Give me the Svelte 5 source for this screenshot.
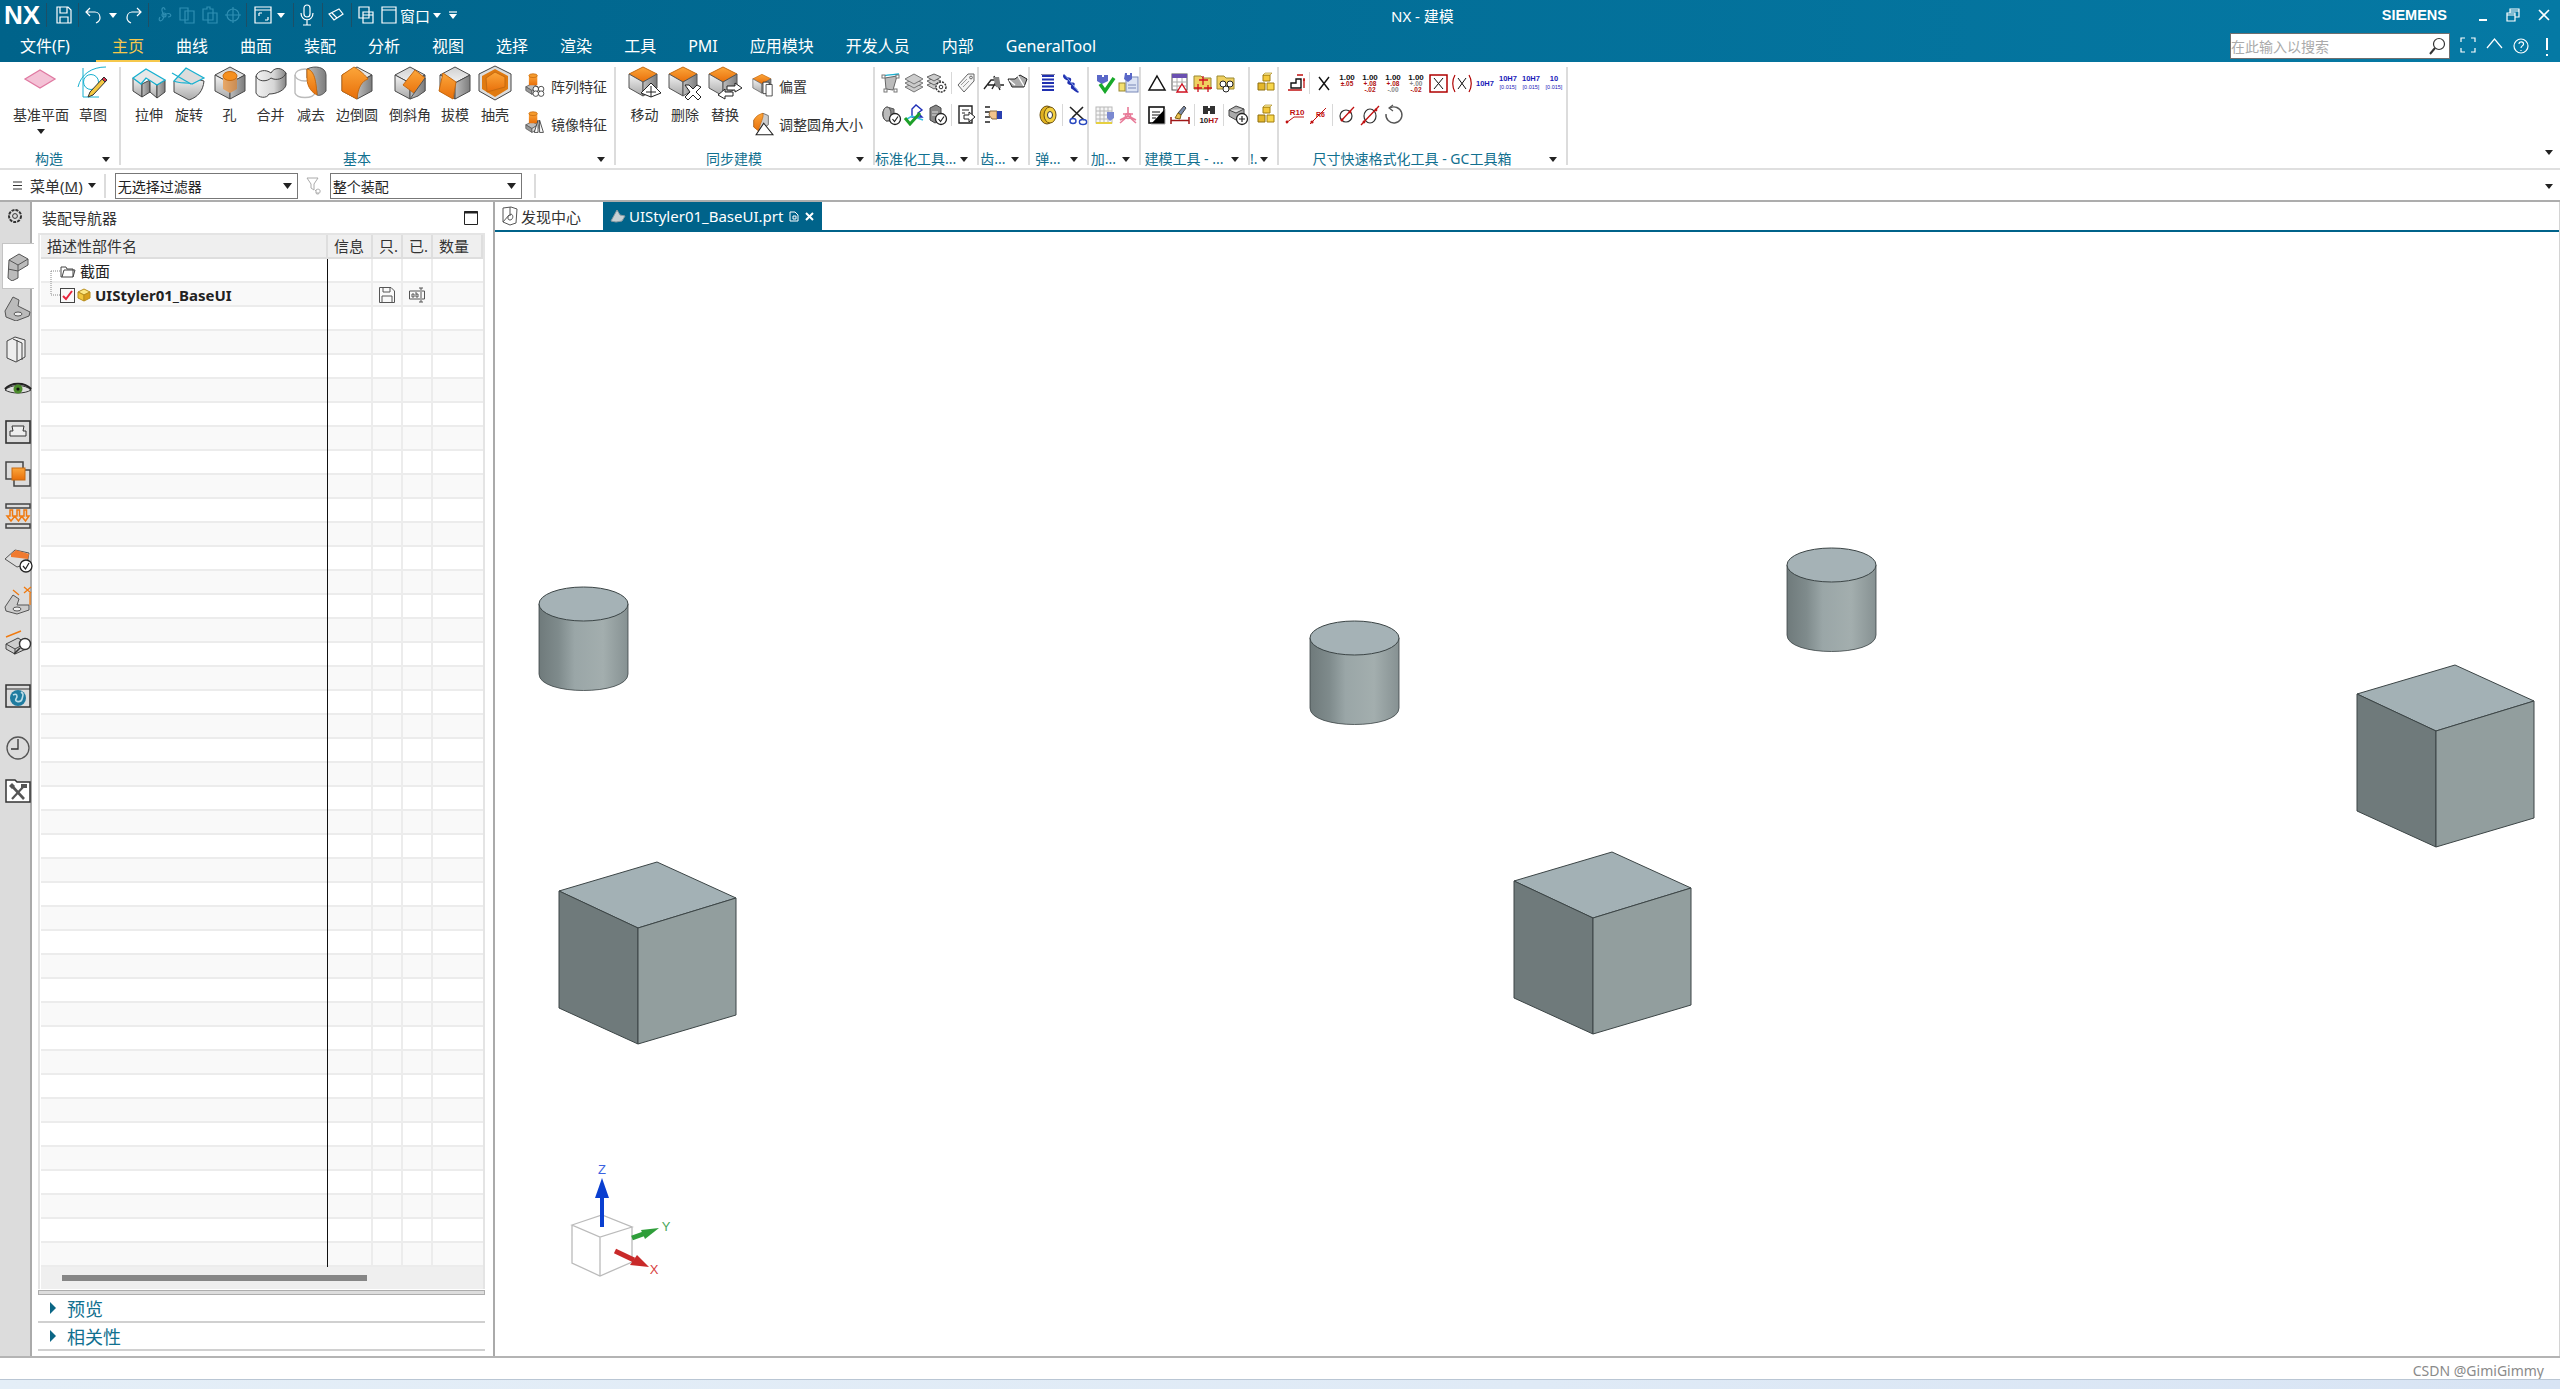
<script>
  const faces = (t = "url(#gT)", l = "url(#gL)", r = "url(#gR)") =>
    `<path d="M18 2 33 10 18 18 3 10z" fill="${t}" stroke="#4a4a4a"/><path d="M3 10 18 18V34L3 26z" fill="${l}" stroke="#4a4a4a"/><path d="M33 10 18 18V34L33 26z" fill="${r}" stroke="#4a4a4a"/>`;
  const orangeTop = `<path d="M16 2 30 9 16 17 2 9z" fill="url(#gO)" stroke="#c76a10"/><path d="M2 9 16 17V31L2 23z" fill="url(#gL)" stroke="#555"/><path d="M30 9 16 17V31L30 23z" fill="url(#gR)" stroke="#555"/>`;
  const miniCyl = `<path d="M8 9 16 5 24 9 16 14z" fill="#bbb" stroke="#555" transform="translate(-5 9)"/><path d="M3 18 11 23V28L3 23z" fill="#999" stroke="#555"/><path d="M11 23 19 18V23L11 28z" fill="#ddd" stroke="#555"/><rect x="7" y="3" width="11" height="13" fill="url(#gO)"/><ellipse cx="12.5" cy="3.5" rx="5.5" ry="2.5" fill="#f59a2c" stroke="#c76a10"/>`;
  const yellowBoxes = `<path d="M8 3h7v6H8z" fill="#f4c93c" stroke="#a27f10"/><path d="M3 11h7v7H3z" fill="#e5b72a" stroke="#8d6e10"/><path d="M12 11h7v7h-7z" fill="#f8d74c" stroke="#a27f10"/><path d="M8 3l2-2h7l-2 2z" fill="#fff0a0" stroke="#a27f10" stroke-width=".6"/>`;
  const num = (a, b, c = "#b01010", d = "#b01010") =>
    `<text x="11" y="8" font-size="8" text-anchor="middle" font-family="Liberation Sans" font-weight="700" fill="#111">1.00</text><text x="11" y="14" font-size="6.5" text-anchor="middle" font-family="Liberation Sans" font-weight="700" fill="${c}">${a}</text><text x="11" y="20" font-size="6.5" text-anchor="middle" font-family="Liberation Sans" font-weight="700" fill="${d}">${b}</text>`;
  const h7 = (a, lines = true) =>
    `<text x="11" y="${lines ? 9 : 14}" font-size="7.5" text-anchor="middle" font-family="Liberation Sans" font-weight="700" fill="#1a1ab8">${a}</text>` +
    (lines ? `<text x="11" y="17" font-size="5.5" text-anchor="middle" font-family="Liberation Sans" fill="#1a1ab8">[0.015]</text>` : "");

  const icons = {
    datum: `<path d="M2 14 17 5 32 14 17 23z" fill="#f4c2d6" stroke="#e07aa2" stroke-width="1.3"/>`,
    sketch: `<path d="M3 22C6 9 17 2 31 2" fill="none" stroke="#18b0d0"/><path d="M8 3V32H24" fill="none" stroke="#18b0d0"/><circle cx="16" cy="17" r="7.5" fill="none" stroke="#18b0d0"/><path d="M29 12 32 15 18 30 13 32 15 27z" fill="#f5c842" stroke="#333"/><path d="M29 12 32 15 30 17 27 14z" fill="#d8304a" stroke="#333"/>`,
    extrude: `<path d="M2 13V26L11 32V19z" fill="url(#gL)" stroke="#444"/><path d="M11 19V32L19 27V15z" fill="url(#gR)" stroke="#444"/><path d="M19 15 26 20V33L19 27z" fill="url(#gL)" stroke="#444"/><path d="M26 20 34 15V27L26 33z" fill="url(#gR)" stroke="#444"/><path d="M2 13 15 4 34 15 26 20 15 13 10 19z" fill="#e8e8e8" stroke="#18b0d0" stroke-width="1.3"/>`,
    revolve: `<path d="M3 16V27L18 35C27 32 32 26 33 16L21 13z" fill="url(#gL)" stroke="#444"/><path d="M3 16 15 3 33 13 21 19C16 17 9 19 3 16z" fill="#dcdcdc" stroke="#18b0d0" stroke-width="1.2"/><path d="M1 8 20 19" stroke="#18b0d0" stroke-width="1.2"/>`,
    hole: faces() + `<path d="M11 11V24L18 28 25 24V11z" fill="url(#gO2)"/><ellipse cx="18" cy="11" rx="7" ry="4.5" fill="#f58f1e" stroke="#c76a10"/>`,
    unite: `<path d="M3 11V28C5 33 14 34 16 29 24 29 32 25 33 20V8C29 2 21 2 18 8 13 4 5 5 3 11z" fill="url(#gU)" stroke="#444"/><path d="M3 11C5 17 14 17 18 13 23 16 31 14 33 8" fill="none" stroke="#444"/>`,
    subtract: `<ellipse cx="12" cy="10" rx="10" ry="6" fill="none" stroke="#bbb" stroke-width="1.4"/><path d="M2 10V28C4 34 20 34 22 28V10" fill="none" stroke="#bbb" stroke-width="1.4"/><path d="M14 4C22 0 33 2 33 10V26C30 30 26 31 24 30 24 21 20 14 14 13z" fill="url(#gR)" stroke="#555"/><path d="M14 4C20 5 23 12 24 30 20 28 14 23 14 13z" fill="url(#gO)" stroke="#c76a10"/>`,
    edge: faces("#e6e6e6") + `<path d="M3 10 15 2C22 6 27 11 29 14 23 16 19 22 18 34L3 26z" fill="url(#gO)" stroke="#c76a10"/>`,
    chamfer: faces() + `<path d="M23 5 33 13 26 31 11 20z" fill="url(#gO)" stroke="#c76a10"/><path d="M18 34 26 31 33 26V13z" fill="url(#gR)" stroke="#555"/>`,
    draft: faces() + `<path d="M6 8 19 17 16 34 2 26z" fill="url(#gO)" stroke="#c76a10"/>`,
    shell: `<path d="M18 1 34 9V26L18 35 2 26V9z" fill="#ddd" stroke="#444"/><path d="M18 4 31 11V24L18 32 5 24V11z" fill="#e07a10"/><path d="M18 7 28 12V22L10 27 9 13z" fill="url(#gO)" stroke="#c76a10"/>`,
    array: miniCyl + `<g fill="#fff" stroke="#222"><circle cx="16" cy="21" r="3.6"/><circle cx="23" cy="21" r="3.6"/><circle cx="16" cy="27" r="3.6"/><circle cx="23" cy="27" r="3.6"/></g>`,
    mirror: miniCyl + `<path d="M14 28 19 12V28zM21 12 26 28H21z" fill="#fff" stroke="#222"/>`,
    move: orangeTop + `<path d="M24 21 34 31 24 35 14 31z" fill="#fff" stroke="#222" transform="translate(0 -3)"/><path d="M24 21V32M19 27H29" stroke="#222"/>`,
    del: orangeTop + `<path d="M18 20 22 20 26 24 30 20 34 22 29 27 34 32 31 35 26 30 21 35 18 32 23 27z" fill="#fff" stroke="#222"/>`,
    replace: orangeTop + `<path d="M20 21H28V18L35 23 28 27V25H20zM26 27H18V24L11 30 18 34V31H26z" fill="#fff" stroke="#222"/>`,
    offset: `<g transform="scale(.85)">${orangeTop}</g><path d="M15 12H23V27H15z" fill="#fff" stroke="#222"/><path d="M19 15H27V30H19z" fill="#fff" stroke="#222"/>`,
    resize: `<path d="M3 12 15 3 22 6V18L10 26 3 21z" fill="#ccc" stroke="#555"/><path d="M3 12C6 6 11 4 15 3 16 9 12 14 9 26L3 21z" fill="url(#gO)" stroke="#c76a10"/><path d="M16 16 28 31H6z" fill="#fff" stroke="#222" stroke-width="1.4"/>`,

    frame: `<path d="M5 6 17 4 13 18 6 17z" fill="#bbb" stroke="#666"/><path d="M3 4C9 2 14 3 19 2" fill="none" stroke="#18b0d0" stroke-width="1.3"/><g fill="#fff" stroke="#777"><rect x="2" y="3" width="3" height="3"/><rect x="16" y="3" width="3" height="3"/><rect x="4" y="17" width="3" height="3"/><rect x="14" y="17" width="3" height="3"/></g>`,
    layers: `<g fill="#ccc" stroke="#777"><path d="M11 11 20 15 11 20 2 15z"/><path d="M11 7 20 11 11 16 2 11z"/><path d="M11 2 20 7 11 12 2 7z"/></g>`,
    gearLayers: `<g fill="#ccc" stroke="#666"><path d="M8 10 15 13 8 17 1 13z"/><path d="M8 6 15 9 8 13 1 9z"/><path d="M8 2 15 5 8 9 1 5z"/></g><circle cx="15" cy="15" r="5" fill="#fff" stroke="#333" stroke-width="1.5" stroke-dasharray="2 1"/><circle cx="15" cy="15" r="1.8" fill="none" stroke="#333"/>`,
    tag: `<path d="M3 13 13 2H19V9L9 20z" fill="#f4f4f4" stroke="#666"/><circle cx="16" cy="5.5" r="1.4" fill="none" stroke="#666"/><path d="M6 13 12 7M8 15 14 9" stroke="#999"/>`,
    cylCheck: `<path d="M7 3C2 5 1 13 6 17H14V5z" fill="#888" stroke="#555"/><ellipse cx="7" cy="10" rx="4" ry="7" fill="#bbb" stroke="#555"/><circle cx="15" cy="15" r="5.5" fill="#fff" stroke="#222" stroke-width="1.3"/><path d="M12.5 15 14.5 17.5 18 12.5" fill="none" stroke="#222" stroke-width="1.2"/>`,
    wrench: `<path d="M9 5 13 1 19 6 15 9 19 13H9z" fill="#fff" stroke="#2030b8" stroke-width="1.4"/><path d="M4 15 9 12 20 16" fill="none" stroke="#36c0e0" stroke-width="1.5"/><path d="M2 14 7 20 17 9" fill="none" stroke="#1ea02a" stroke-width="3"/>`,
    boxCheck: `<path d="M4 4 10 1 15 4V16L9 19 4 16z" fill="#888" stroke="#444"/><path d="M6 8H12M6 11H12" stroke="#ddd"/><circle cx="15" cy="15" r="5.5" fill="#fff" stroke="#222" stroke-width="1.3"/><path d="M12.5 15 14.5 17.5 18 12.5" fill="none" stroke="#222" stroke-width="1.2"/>`,
    docArrow: `<path d="M4 2H17V19H4z" fill="#fff" stroke="#222" stroke-width="1.4"/><path d="M7 6H14M7 9H10" stroke="#222"/><path d="M9 11H14V8L20 13 14 18V15H9z" fill="#fff" stroke="#222"/>`,
    skA: `<path d="M1 17 8 8H14L9 17M5 13H21M11 4 17 18" fill="none" stroke="#222" stroke-width="1.4"/><path d="M10 5 16 5 18 16 13 15z" fill="#888"/>`,
    skB: `<path d="M2 7 6 15H18L21 7 14 3 9 7z" fill="#aaa" stroke="#222"/><path d="M3 8 9 13M12 4 18 14" stroke="#fff" stroke-width="1.4"/>`,
    hand: `<path d="M2 3H7M2 8H7M2 13H7M2 18H7" stroke="#222" stroke-width="1.5"/><path d="M7 7H14V15H9L6 11z" fill="#f2c48c" stroke="#8a6a40"/><rect x="14" y="7" width="5" height="8" fill="#2a40b0"/>`,
    coil: `<g fill="none" stroke="#2030b0" stroke-width="2"><path d="M5 4H17M5 7.5H17M5 11H17M5 14.5H17M5 18H17"/></g><path d="M4 2.5H18" stroke="#88a" />`,
    spring: `<path d="M5 3C3 5 7 7 9 7S8 10 9 11 12 12 13 12 11 15 13 16 17 20 18 19" fill="none" stroke="#2030b0" stroke-width="3"/><path d="M5 3 18 19" stroke="#88a8e8"/>`,
    goldCoil: `<ellipse cx="10" cy="11" rx="7" ry="9" fill="#e0b020" stroke="#6a5010"/><ellipse cx="13" cy="11" rx="6" ry="8" fill="#f4d040" stroke="#6a5010"/><ellipse cx="13" cy="11" rx="2.5" ry="3.5" fill="#fff" stroke="#333"/>`,
    scissors: `<path d="M4 3 18 16M17 3 6 14" stroke="#222" stroke-width="1.6"/><ellipse cx="7" cy="17" rx="3" ry="2.5" fill="none" stroke="#2848c0" stroke-width="1.4"/><ellipse cx="17" cy="18" rx="3.6" ry="2.5" fill="none" stroke="#2848c0" stroke-width="1.4"/>`,
    check: `<path d="M3 3H8V5H10V3H14V9L8 12 3 9z" fill="#5a68c8"/><path d="M6 12 11 19 20 6" fill="none" stroke="#18a82a" stroke-width="3.5"/>`,
    plugDoc: `<rect x="9" y="5" width="12" height="15" fill="#dce4f4" stroke="#7888b8"/><path d="M8 1H10V3H13V1H15V7L11 10 7 7z" fill="#5a68c8"/><path d="M11 13H19M11 16H19" stroke="#7888b8"/><rect x="2" y="11" width="6" height="8" fill="#f4e070" stroke="#998830"/>`,
    gridPlug: `<g stroke="#b8b8b8" fill="#f6f6f6"><rect x="2" y="3" width="16" height="16"/><path d="M2 7H18M2 11H18M2 15H18M6 3V19M10 3V19M14 3V19" fill="none"/></g><path d="M2 19H18" stroke="#e6d040" stroke-width="2"/><path d="M13 8H20V14L16 17 13 14z" fill="#7a88d0"/>`,
    triad: `<g fill="none" stroke="#e87a98" stroke-width="1.6"><path d="M11 3V12L3 19M11 12 19 19M3 16 11 12 19 16M6 10H16"/><circle cx="11" cy="12" r="2.5"/></g>`,
    tri: `<path d="M11 4 19 18H3z" fill="#fff" stroke="#111" stroke-width="1.5"/>`,
    table: `<rect x="3" y="2" width="15" height="16" fill="#fff" stroke="#555"/><rect x="3" y="2" width="15" height="4" fill="#6a50b0"/><path d="M3 10H18M3 14H18M8 6V18M13 6V18" stroke="#aaa"/><path d="M13 12 18 20H8z" fill="#fff" stroke="#d01020" stroke-width="1.4"/>`,
    folderX: `<path d="M2 4H9L11 6H19V17H2z" fill="#f0d060" stroke="#998830"/><path d="M11 4V13M7 8H16M6 12V20M2 16H10M16 13V20M12 16H20" stroke="#d01020" stroke-width="1.3"/>`,
    folderO: `<path d="M2 4H9L11 6H19V17H2z" fill="#f0d060" stroke="#998830"/><g fill="#fff" stroke="#222"><circle cx="8" cy="12" r="3"/><circle cx="15" cy="12" r="3"/><circle cx="11" cy="17" r="3"/></g>`,
    note: `<rect x="3" y="3" width="15" height="16" fill="#fff" stroke="#111" stroke-width="1.6"/><path d="M6 8H14M6 11H14M6 14H10" stroke="#111"/><path d="M19 5V20H5" stroke="#aaa"/>`,
    brush: `<path d="M2 13V20M20 13V20M2 16.5H20" stroke="#a01818" stroke-width="1.5"/><path d="M9 9 15 2 17 4 12 11z" fill="#7a8aa8" stroke="#444"/><path d="M6 14 9 9 12 11 11 15z" fill="#e8c050" stroke="#806010"/>`,
    binoc: `<g fill="#333"><rect x="5" y="2" width="5" height="8"/><rect x="12" y="2" width="5" height="8"/><rect x="9" y="4" width="4" height="3"/></g><text x="11" y="19" font-size="8" text-anchor="middle" font-weight="700" font-family="Liberation Sans" fill="#222">10<tspan fill="#b01010">H7</tspan></text>`,
    blockPlus: `<path d="M2 6 9 2 17 5V12L9 16 2 12z" fill="#aaa" stroke="#444"/><path d="M2 6 9 9 17 5" fill="#ddd" stroke="#444"/><circle cx="15" cy="15" r="5.5" fill="#fff" stroke="#222" stroke-width="1.3"/><path d="M15 12V18M12 15H18" stroke="#222" stroke-width="1.2"/>`,
    boxes: yellowBoxes,
    stepDim: `<path d="M7 16H17V7H12V11H7z" fill="none" stroke="#111" stroke-width="1.4"/><path d="M4 18H18M4 20H4M13 3H19M19 8H21M20 6V16" stroke="#c01010" stroke-width="1.3"/>`,
    x: `<path d="M6 5 16 18M16 5 6 18" stroke="#111" stroke-width="1.4"/>`,
    n1: num("±.05", ""),
    n2: num("+.08", "-.02"),
    n3: num("+.08", "-.00", "#b01010", "#888"),
    n4: num("+.00", "-.02", "#888", "#b01010"),
    xBox: `<rect x="2" y="3" width="17" height="17" fill="#fff" stroke="#b00000" stroke-width="1.5"/><path d="M6 6 15 17M15 6 6 17" stroke="#111"/>`,
    xParen: `<path d="M4 3C1 8 1 15 4 20M18 3C21 8 21 15 18 20" fill="none" stroke="#b00000" stroke-width="1.2"/><path d="M7 6 15 17M15 6 7 17" stroke="#111"/>`,
    h1: h7("10H7", false),
    h2: h7("10H7"),
    h3: h7("10H7"),
    h4: h7("10"),
    rDim: `<path d="M2 19 10 13H20" fill="none" stroke="#c01010"/><text x="13" y="11" font-size="8" font-weight="700" text-anchor="middle" font-family="Liberation Sans" fill="#c01010">R10</text><circle cx="3" cy="18" r="1.4" fill="#c01010"/>`,
    rDiag: `<path d="M3 20 19 4" stroke="#c01010"/><circle cx="5" cy="18" r="1.6" fill="#c01010"/><text x="9" y="13" font-size="7" font-weight="700" font-family="Liberation Sans" fill="#c01010">R6</text>`,
    dia: `<ellipse cx="10" cy="12" rx="6" ry="6" fill="none" stroke="#333" stroke-width="1.2"/><path d="M5 17 18 3" stroke="#c01010" stroke-width="1.3"/><circle cx="6" cy="16" r="1.4" fill="#c01010"/><circle cx="14" cy="8" r="1.4" fill="#c01010"/>`,
    dia2: `<ellipse cx="11" cy="12" rx="6" ry="7" fill="none" stroke="#333" stroke-width="1.2"/><path d="M2 21 20 2" stroke="#c01010" stroke-width="1.3"/><circle cx="5" cy="18" r="1.4" fill="#c01010"/><circle cx="17" cy="6" r="1.4" fill="#c01010"/>`,
    undoC: `<path d="M8 4A8 8 0 1 1 4 10" fill="none" stroke="#555" stroke-width="1.4"/><path d="M11 1 7 4 11 7" fill="none" stroke="#555" stroke-width="1.2"/>`,

    navGear: `<circle cx="11" cy="11" r="6" fill="#ddd" stroke="#333" stroke-width="2" stroke-dasharray="3 1"/><circle cx="11" cy="11" r="2.4" fill="none" stroke="#333"/>`,
    navAsm: `<path d="M5 9 15 3 24 8 24 14 14 20 14 27 8 30 4 27z" fill="#bbb" stroke="#555"/><path d="M5 9 14 14 24 8M14 14V20M4 18 14 20" fill="none" stroke="#555"/>`,
    navPart: `<path d="M2 20 10 6 16 9 15 15 27 21 26 25 13 30 3 26z" fill="#bbb" stroke="#555"/><ellipse cx="15" cy="23" rx="4" ry="2" fill="#eee" stroke="#555"/>`,
    navBooks: `<path d="M4 8 12 4 22 7V24L13 29 4 25z" fill="#eee" stroke="#444"/><path d="M10 6 19 10V27M14 7V28" fill="none" stroke="#444"/>`,
    navEye: `<path d="M2 15C8 9 22 9 28 15 22 19 8 19 2 15z" fill="#ddd" stroke="#333"/><path d="M2 14C8 7 22 7 28 14" fill="none" stroke="#222" stroke-width="2"/><circle cx="15" cy="14" r="4.5" fill="#4a8a2a"/><circle cx="15" cy="14" r="1.6" fill="#111"/>`,
    navRoles: `<rect x="3" y="4" width="24" height="22" fill="none" stroke="#333" stroke-width="1.6"/><path d="M9 9H21L20 14H23V19H7V14H10z" fill="#eee" stroke="#333"/>`,
    navLayer: `<rect x="3" y="3" width="17" height="17" fill="none" stroke="#444" stroke-width="1.5"/><rect x="11" y="11" width="16" height="16" fill="none" stroke="#444" stroke-width="1.5"/><rect x="9" y="9" width="13" height="12" fill="url(#gO)" stroke="#c76a10"/>`,
    navPress: `<rect x="3" y="3" width="24" height="4" fill="none" stroke="#444" stroke-width="1.5"/><rect x="3" y="23" width="24" height="4" fill="none" stroke="#444" stroke-width="1.5"/><g fill="none" stroke="#f07a10" stroke-width="1.5"><path d="M7 9V15H4L8 20 12 15H9.5V9zM14 9V15H11.5L15.5 20 19 15H16.5V9zM21 9V15H18.5L22.5 20 26 15H23.5V9z"/></g>`,
    navCheck: `<path d="M2 16 12 7 26 10 24 21 14 24z" fill="#ddd" stroke="#555"/><path d="M8 11 13 7 26 11 25 16 8 14z" fill="#f07a30"/><circle cx="23" cy="23" r="6" fill="#fff" stroke="#222" stroke-width="1.3"/><path d="M20 23 22.5 26 26 20" fill="none" stroke="#222" stroke-width="1.2"/>`,
    navDim: `<path d="M2 22 10 10 16 14 14 20 26 20V25L14 29 3 26z" fill="#ccc" stroke="#555"/><ellipse cx="14" cy="24" rx="4" ry="2" fill="#eee" stroke="#555"/><g fill="none" stroke="#f07a10" stroke-width="1.3"><path d="M10 5 16 10M21 8 28 2M21 2 28 8M27 8V20"/></g>`,
    navSearch: `<path d="M3 17 15 11 23 16 23 22 12 27 3 22z" fill="#ccc" stroke="#444"/><path d="M3 17 12 22 23 16M12 22V27" fill="none" stroke="#444"/><path d="M3 10 18 4" stroke="#f07a10" stroke-width="1.4"/><circle cx="22" cy="17" r="5.5" fill="#fff" stroke="#333" stroke-width="1.4"/><path d="M17 21 11 27" stroke="#333" stroke-width="1.6"/>`,
    navWeb: `<rect x="3" y="4" width="24" height="22" fill="none" stroke="#333" stroke-width="1.5"/><path d="M3 8H27" stroke="#333"/><circle cx="15" cy="17" r="8" fill="#1f7ca0"/><path d="M10 14C14 12 15 15 13 18S18 22 19 18 21 13 18 11" fill="none" stroke="#bcdde8" stroke-width="1.6"/>`,
    navClock: `<circle cx="15" cy="15" r="11" fill="none" stroke="#555" stroke-width="1.3"/><path d="M15 6V16H8" fill="none" stroke="#333" stroke-width="1.3"/>`,
    navTools: `<path d="M3 5H12L14 7H27V27H3z" fill="#fff" stroke="#333" stroke-width="1.5"/><path d="M9 11 21 24" stroke="#555" stroke-width="2.6"/><path d="M21 11 9 24" stroke="#555" stroke-width="2.2"/><path d="M6 11 9 8 12 11 9 14z" fill="#555"/><path d="M18 9 24 9 24 13 18 13z" fill="#555"/>`,
  };

  const groups = [
    { width: 121, label: "构造", pad: 9, large: [
      { icon: "datum", text: "基准平面", w: 64, more: true },
      { icon: "sketch", text: "草图", w: 40 },
    ] },
    { width: 495, label: "基本", pad: 8, large: [
      { icon: "extrude", text: "拉伸", w: 40 },
      { icon: "revolve", text: "旋转", w: 40 },
      { icon: "hole", text: "孔", w: 41 },
      { icon: "unite", text: "合并", w: 41 },
      { icon: "subtract", text: "减去", w: 40 },
      { icon: "edge", text: "边倒圆", w: 52 },
      { icon: "chamfer", text: "倒斜角", w: 54 },
      { icon: "draft", text: "拔模", w: 36 },
      { icon: "shell", text: "抽壳", w: 44 },
    ], stack: [
      { icon: "array", text: "阵列特征" },
      { icon: "mirror", text: "镜像特征" },
    ] },
    { width: 259, label: "同步建模", pad: 8, large: [
      { icon: "move", text: "移动", w: 41 },
      { icon: "del", text: "删除", w: 40 },
      { icon: "replace", text: "替换", w: 40 },
    ], stack: [
      { icon: "offset", text: "偏置" },
      { icon: "resize", text: "调整圆角大小" },
    ] },
    { width: 104, label: "标准化工具...", pad: 4, rows: [
      ["frame", "layers", "gearLayers", "|", "tag"],
      ["cylCheck", "wrench", "boxCheck", "|", "docArrow"],
    ] },
    { width: 51, label: "齿...", pad: 3, rows: [["skA", "skB"], ["hand"]] },
    { width: 59, label: "弹...", pad: 6, rows: [["coil", "spring"], ["goldCoil", "|", "scissors"]] },
    { width: 52, label: "加...", pad: 4, rows: [["check", "plugDoc"], ["gridPlug", "triad"]] },
    { width: 109, label: "建模工具 - ...", pad: 4, rows: [
      ["tri", "table", "folderX", "folderO"],
      ["note", "brush", "|", "binoc", "|", "blockPlus"],
    ] },
    { width: 29, label: "!.", pad: 4, rows: [["boxes"], ["boxes"]] },
    { width: 289, label: "尺寸快速格式化工具 - GC工具箱", pad: 4, rows: [
      ["stepDim", "|", "x", "n1", "n2", "n3", "n4", "xBox", "xParen", "h1", "h2", "h3", "h4"],
      ["rDim", "rDiag", "|", "dia", "dia2", "undoC"],
    ] },
  ];

  const menus = ["主页", "曲线", "曲面", "装配", "分析", "视图", "选择", "渲染", "工具", "PMI", "应用模块", "开发人员", "内部", "GeneralTool"];
  const navIcons = ["navAsm", "navPart", "navBooks", "navEye", "navRoles", "navLayer", "navPress", "navCheck", "navDim", "navSearch"];
  const navIconsLower = ["navWeb", "navClock", "navTools"];
  const rows = Array.from({ length: 42 }, (_, i) => i);

  const cylinders = [[0, 0], [771, 34], [1248, -39]];
  const cubes = [[0, 0], [955, -10], [1798, -197]];
</script>

<svg class="defs" aria-hidden="true">
  <defs>
    <linearGradient id="gT" x1="0" y1="0" x2="0" y2="1"><stop offset="0" stop-color="#d0d0d0" /><stop offset="1" stop-color="#f2f2f2" /></linearGradient>
    <linearGradient id="gL" x1="0" y1="0" x2="0" y2="1"><stop offset="0" stop-color="#f4f4f4" /><stop offset="1" stop-color="#a8a8a8" /></linearGradient>
    <linearGradient id="gR" x1="0" y1="0" x2="1" y2="0"><stop offset="0" stop-color="#bdbdbd" /><stop offset="1" stop-color="#7c7c7c" /></linearGradient>
    <linearGradient id="gU" x1="0" y1="0" x2="1" y2="0"><stop offset="0" stop-color="#f2f2f2" /><stop offset=".6" stop-color="#d6d6d6" /><stop offset="1" stop-color="#848484" /></linearGradient>
    <linearGradient id="gO" x1="0" y1="0" x2="0" y2="1"><stop offset="0" stop-color="#fca63a" /><stop offset="1" stop-color="#e86f0a" /></linearGradient>
    <linearGradient id="gO2" x1="0" y1="0" x2="1" y2="0"><stop offset="0" stop-color="#e8a868" /><stop offset="1" stop-color="#c98c54" /></linearGradient>
    <linearGradient id="cyl" x1="0" y1="0" x2="1" y2="0">
      <stop offset="0" stop-color="#6f7a7b" />
      <stop offset=".22" stop-color="#7f8b8c" />
      <stop offset=".4" stop-color="#9aa6a7" />
      <stop offset=".72" stop-color="#a3aeae" />
      <stop offset="1" stop-color="#869192" />
    </linearGradient>
  </defs>
</svg>

{#snippet icon(name, size)}
  <svg class="ico" width={size} height={size} viewBox={size >= 26 ? (size === 26 ? "0 0 30 34" : size === 30 ? "0 0 30 30" : "0 0 36 36") : "0 0 22 22"}>{@html icons[name]}</svg>
{/snippet}

{#snippet arrow()}
  <svg class="arrow" width="8" height="5" viewBox="0 0 8 5"><path d="M0 0H8L4 5z" /></svg>
{/snippet}

<div class="app">
  <header class="head">
    <div class="title-row">
      <span class="nx">NX</span>
      <div class="qa">
        <span class="qsep"></span>
        <svg class="ml8" width="18" height="20" viewBox="0 0 18 20"><path d="M2 2H13L16 5V18H2zM5 2V8H12V2M5 18V12H13V18" /></svg>
        <span class="qsep ml5"></span>
        <svg class="ml5" width="18" height="20" viewBox="0 0 18 20"><path d="M6 3 2 7 6 11M2 7H11C15 7 16 11 16 13S14 17 12 18" /></svg>
        <svg class="ml7" width="8" height="5" viewBox="0 0 8 5"><path class="solid" d="M0 0H8L4 5z" /></svg>
        <svg class="ml8" width="18" height="20" viewBox="0 0 18 20"><path d="M12 3 16 7 12 11M16 7H7C3 7 2 11 2 13S4 17 6 18" /></svg>
        <span class="qsep ml5"></span>
        <div class="off ml6">
          <svg width="18" height="20" viewBox="0 0 18 20"><path d="M9 10C4 2 10 1 10 5M9 10C16 6 18 12 13 12M9 10C8 18 2 17 5 12" /><circle cx="9" cy="10" r="2" /></svg>
          <svg width="18" height="20" viewBox="0 0 18 20"><path d="M2 3H10V15H2zM7 6H16V18H7z" /></svg>
          <svg width="18" height="20" viewBox="0 0 18 20"><path d="M2 4H6V2H9V4H12V15H2zM7 8H16V18H7z" /></svg>
          <svg width="18" height="20" viewBox="0 0 18 20"><circle cx="9" cy="10" r="6" /><path d="M9 2V18M1 10H17" /></svg>
        </div>
        <span class="qsep ml4"></span>
        <svg class="ml6" width="22" height="20" viewBox="0 0 22 20"><path d="M2 2H18V18H2zM2 5H18M6 8V11M6 8H9M15 15V12M15 15H12" /></svg>
        <svg class="ml2" width="8" height="5" viewBox="0 0 8 5"><path class="solid" d="M0 0H8L4 5z" /></svg>
        <span class="qsep ml8"></span>
        <svg class="ml6" width="14" height="22" viewBox="0 0 14 22"><rect x="4" y="1" width="6" height="12" rx="3" /><path d="M1 9C1 18 13 18 13 9M7 16V21M3 21H11" /></svg>
        <span class="qsep ml8"></span>
        <svg class="ml4" width="18" height="18" viewBox="0 0 18 18"><path d="M2 8 12 3 16 8 7 14zM5 7 10 12" /></svg>
        <span class="qsep ml6"></span>
        <svg class="ml6" width="16" height="20" viewBox="0 0 16 20"><path d="M1 2H11V13H1zM5 7H15V18H5zM5 10H15" /></svg>
        <svg class="ml7" width="16" height="20" viewBox="0 0 16 20"><path d="M1 2H15V18H1zM1 5H15" /></svg>
        <span class="win">窗口</span>
        <svg class="ml3" width="8" height="5" viewBox="0 0 8 5"><path class="solid" d="M0 0H8L4 5z" /></svg>
        <svg class="ml8" width="8" height="8" viewBox="0 0 8 8"><path d="M0 1H8" /><path class="solid" d="M0 3H8L4 8z" /></svg>
      </div>
      <span class="doc-title">NX - 建模</span>
      <span class="siemens">SIEMENS</span>
      <div class="win-ctl">
        <svg width="12" height="14" viewBox="0 0 12 14"><path d="M2 12H10" stroke-width="2" /></svg>
        <svg width="14" height="14" viewBox="0 0 14 14"><path d="M1 5H9V13H1zM1 7H9M4 5V1H13V9H9M4 3H13" /></svg>
        <svg width="14" height="14" viewBox="0 0 14 14"><path d="M2 2 12 12M12 2 2 12" stroke-width="1.6" /></svg>
      </div>
    </div>
    <nav class="menu-row">
      <span class="file">文件(F)</span>
      {#each menus as m, i}
        <span class="tab" class:on={i === 0}>{m}</span>
      {/each}
      <div class="search">
        <span>在此输入以搜索</span>
        <svg width="18" height="20" viewBox="0 0 18 20"><circle cx="11" cy="8" r="5.5" /><path d="M7 12 2 18" stroke-width="2" /></svg>
      </div>
      <div class="help">
        <svg width="16" height="16" viewBox="0 0 16 16"><path d="M1 5V1H5M11 1H15V5M1 11V15H5M11 15H15V11" /></svg>
        <svg width="17" height="12" viewBox="0 0 17 12"><path d="M1 11 8.500 2 16 11" /></svg>
        <svg width="16" height="18" viewBox="0 0 16 18"><circle cx="8" cy="9" r="7" /><path d="M6 7C6 4 11 4 10.500 7.500 10 9 8 9 8 11M8 13V14" /></svg>
        <svg class="bang" width="4" height="20" viewBox="0 0 4 20"><path d="M2 1V13M2 17V19" stroke-width="2" /></svg>
      </div>
    </nav>
  </header>

  <section class="ribbon">
    {#each groups as g}
      <div class="group" style="width:{g.width}px">
        <div class="body" style="padding-left:{g.pad}px">
          {#if g.large}
            {#each g.large as c}
              <div class="cmd" style="width:{c.w}px">
                {@render icon(c.icon, 36)}
                <span>{c.text}</span>
                {#if c.more}{@render arrow()}{/if}
              </div>
            {/each}
          {/if}
          {#if g.stack}
            <div class="stack">
              {#each g.stack as s}
                <div class="stack-item">
                  {@render icon(s.icon, 26)}
                  <span>{s.text}</span>
                </div>
              {/each}
            </div>
          {/if}
          {#if g.rows}
            <div class="rows">
              {#each g.rows as row}
                <div class="tool-row">
                  {#each row as t}
                    {#if t === "|"}
                      <i class="tool-sep"></i>
                    {:else}
                      <span class="tool">{@render icon(t, 22)}</span>
                    {/if}
                  {/each}
                </div>
              {/each}
            </div>
          {/if}
        </div>
        <div class="foot">
          <span>{g.label}</span>
          {@render arrow()}
        </div>
      </div>
    {/each}
    <div class="ribbon-end">{@render arrow()}</div>
  </section>

  <section class="toolbar">
    <svg class="burger" width="9" height="9" viewBox="0 0 9 9"><path d="M0 1H9M0 4.500H9M0 8H9" /></svg>
    <span class="menu-btn">菜单(<u>M</u>)</span>
    {@render arrow()}
    <i class="bar-sep first"></i>
    <div class="combo one"><span>无选择过滤器</span><svg class="arrow big" width="9" height="6" viewBox="0 0 9 6"><path d="M0 0H9L4.500 6z" /></svg></div>
    <svg class="funnel" width="16" height="18" viewBox="0 0 16 18"><path d="M1 1H12L8 7V13L5 11V7zM9 14C11 11 15 12 14 15S10 17 10 16M10 13V16H13" /></svg>
    <div class="combo two"><span>整个装配</span><svg class="arrow big" width="9" height="6" viewBox="0 0 9 6"><path d="M0 0H9L4.500 6z" /></svg></div>
    <i class="bar-sep"></i>
    <div class="bar-end">{@render arrow()}</div>
  </section>

  <main class="work">
    <aside class="strip">
      <div class="strip-top">{@render icon("navGear", 22)}</div>
      {#each navIcons as n, i}
        <div class="strip-btn" class:on={i === 0}>{@render icon(n, 30)}</div>
      {/each}
      <div class="strip-gap"></div>
      {#each navIconsLower as n}
        <div class="strip-btn lower">{@render icon(n, 30)}</div>
      {/each}
    </aside>

    <section class="nav">
      <div class="nav-title">
        <span>装配导航器</span>
        <svg width="14" height="14" viewBox="0 0 14 14"><path d="M.5 .5H13.500V13.500H.5z" /><path d="M0 1.500H14" stroke-width="2" /></svg>
      </div>
      <div class="grid">
        <div class="line header">
          <span>描述性部件名</span><span>信息</span><span>只.</span><span>已.</span><span>数量</span>
        </div>
        {#each rows as r}
          <div class="line" class:alt={r % 2 === 1}>
            <span class="name">
              {#if r === 0}
                <svg class="tree" width="10" height="24" viewBox="0 0 10 24"><path d="M1 12V24M1 12H10" /></svg>
                <svg width="16" height="14" viewBox="0 0 16 14"><path d="M1 3H6L7 5H13V13H1zM2 13 4 6H15L13 13" /></svg>
                <b class="plain">截面</b>
              {:else if r === 1}
                <svg class="tree" width="10" height="24" viewBox="0 0 10 24"><path d="M1 0V12H10" /></svg>
                <svg class="checkbox" width="15" height="15" viewBox="0 0 15 15"><rect x=".5" y=".5" width="14" height="14" /><path d="M3 8 6 11 12 3" /></svg>
                <svg class="part" width="14" height="14" viewBox="0 0 14 14"><path d="M1 4 7 1 13 4 7 7z" fill="#fbe684" stroke="#b88f20" /><path d="M1 4 7 7V13L1 10z" fill="#f2c63c" stroke="#b88f20" /><path d="M13 4 7 7V13L13 10z" fill="#d99f1c" stroke="#b88f20" /></svg>
                <b>UIStyler01_BaseUI</b>
              {/if}
            </span>
            <span></span>
            <span class="mid">
              {#if r === 1}
                <svg width="16" height="16" viewBox="0 0 16 16"><path d="M.5 .5H12L15.500 4V15.500H.5zM4 .5V5H11V.5M3 15.500V9H13V15.500" /></svg>
              {/if}
            </span>
            <span class="mid">
              {#if r === 1}
                <svg width="16" height="16" viewBox="0 0 16 16"><path d="M.5 4H11M13 4H15.500V12H13M11 12H.5V4M12 1V15M10 1H14M10 15H14" /><path d="M3 7H5V10H3zM7 5V10H9V7H7" /></svg>
              {/if}
            </span>
            <span></span>
          </div>
        {/each}
        <div class="hscroll"><i></i></div>
      </div>
      <div class="splitter"></div>
      <div class="section"><svg width="6" height="12" viewBox="0 0 6 12"><path d="M0 0 6 6 0 12z" /></svg><span>预览</span></div>
      <div class="section"><svg width="6" height="12" viewBox="0 0 6 12"><path d="M0 0 6 6 0 12z" /></svg><span>相关性</span></div>
    </section>

    <section class="view">
      <div class="tabs">
        <div class="doc-tab home">
          <svg width="18" height="20" viewBox="0 0 18 20"><path d="M2 2 10 1 16 3 15 17 9 19 2 16zM9 1V10M2 16 8 9M10 8C13 9 12 14 9 14S6 10 10 8" /></svg>
          <span>发现中心</span>
        </div>
        <div class="doc-tab active">
          <svg width="16" height="16" viewBox="0 0 16 16"><path d="M1 13 7 2 10 7 15 8 12 13 6 14z" fill="#c8d0d4" stroke="#8a9aa2" /></svg>
          <span>UIStyler01_BaseUI.prt</span>
          <svg class="mini" width="10" height="11" viewBox="0 0 10 11"><path d="M1 1H6L9 4V10H1zM4 5H7V8H4z" /></svg>
          <svg class="mini" width="9" height="9" viewBox="0 0 9 9"><path d="M1 1 8 8M8 1 1 8" stroke-width="2" /></svg>
        </div>
      </div>
      <svg class="scene" viewBox="495 232 2065 1124" role="img" aria-label="模型视图">
        {#each cylinders as [dx, dy]}
          <g transform="translate({dx} {dy})" stroke="#3c4546">
            <path d="M539 604V674C539 696 628 696 628 674V604z" fill="url(#cyl)" stroke-width=".8" />
            <ellipse cx="583.500" cy="604" rx="44.500" ry="17" fill="#a5b2b6" />
          </g>
        {/each}
        {#each cubes as [dx, dy]}
          <g transform="translate({dx} {dy})" stroke="#3c4546" stroke-linejoin="round">
            <path d="M559 891 657 862 736 898 638 928z" fill="#a3b1b5" />
            <path d="M559 891 638 928V1044L559 1008z" fill="#6f7a7b" />
            <path d="M736 898 638 928V1044L736 1015z" fill="#929e9e" />
          </g>
        {/each}
        <g class="triad">
          <path d="M572 1225 602 1215 632 1227 600 1237zM572 1225V1263L600 1276 632 1262V1227M600 1237V1276" fill="#fff" stroke="#bbb" stroke-width="1.3" />
          <path d="M602 1227V1196" stroke="#0a3fd0" stroke-width="4" />
          <path d="M602 1178 609 1198H595z" fill="#0a3fd0" />
          <path d="M632 1238 646 1233" stroke="#2f9e3a" stroke-width="5" />
          <path d="M659 1228 645 1239 641 1230z" fill="#2f9e3a" />
          <path d="M615 1251 634 1260" stroke="#c92a2a" stroke-width="5" />
          <path d="M649 1267 630 1265 637 1255z" fill="#c92a2a" />
          <text x="602" y="1174" fill="#3a62e0">Z</text>
          <text x="666" y="1231" fill="#4aa85a">Y</text>
          <text x="654" y="1274" fill="#d84040">X</text>
        </g>
      </svg>
    </section>
  </main>

  <footer class="status"><span>CSDN @GimiGimmy</span></footer>
  <div class="desk"></div>
</div>

<style>
  :global(body) {
    margin: 0;
    background: #fff;
  }

  .defs {
    position: absolute;
    width: 0;
    height: 0;
  }

  .app {
    display: flex;
    flex-direction: column;
    width: 2560px;
    height: 1389px;
    overflow: hidden;
    font-family: "Noto Sans", "Noto Sans CJK SC", sans-serif;
    font-size: 16px;
    color: #333;
  }

  .ico {
    display: block;
    flex: none;
  }

  .arrow {
    flex: none;
    fill: #222;
  }

  .ml2 { margin-left: 2px; }
  .ml3 { margin-left: 3px; }
  .ml4 { margin-left: 4px; }
  .ml5 { margin-left: 5px; }
  .ml6 { margin-left: 6px; }
  .ml7 { margin-left: 7px; }
  .ml8 { margin-left: 8px; }

  /* header */
  .head {
    flex: none;
    height: 62px;
    background: linear-gradient(90deg, #00638a, #0579a4);
    color: #fff;
  }

  .title-row {
    display: flex;
    align-items: center;
    height: 33px;
    padding-bottom: 3px;
    box-sizing: border-box;
  }

  .nx {
    width: 46px;
    padding-left: 4px;
    box-sizing: border-box;
    font-family: "Liberation Sans", sans-serif;
    font-weight: 700;
    font-size: 26px;
  }

  .qa {
    display: flex;
    align-items: center;
    width: 1345px;
    flex: none;
  }

  .qa svg,
  .win-ctl svg,
  .help svg,
  .search svg {
    flex: none;
    fill: none;
    stroke: #fff;
    stroke-width: 1.2;
  }

  .qa .solid {
    fill: #fff;
    stroke: none;
  }

  .qsep {
    width: 1px;
    height: 24px;
    background: #1d4f66;
    flex: none;
  }

  .off {
    display: flex;
    gap: 5px;
  }

  .qa .off svg {
    stroke: #2f8fb3;
  }

  .win {
    margin-left: 3px;
    font-size: 15px;
  }

  .doc-title {
    font-size: 15px;
    margin-right: auto;
  }

  .siemens {
    font-family: "Liberation Sans", sans-serif;
    font-weight: 700;
    font-size: 14.5px;
    margin-right: 30px;
  }

  .win-ctl {
    display: flex;
    gap: 17px;
    margin-right: 9px;
  }

  .menu-row {
    display: flex;
    align-items: stretch;
    height: 29px;
  }

  .file {
    width: 96px;
    padding-left: 20px;
    box-sizing: border-box;
    line-height: 26px;
  }

  .tab {
    padding: 0 16px;
    line-height: 26px;
    white-space: nowrap;
  }

  .tab.on {
    color: #f6c84c;
    border-bottom: 2px solid #f6c84c;
    height: 27px;
  }

  .search {
    display: flex;
    align-items: center;
    justify-content: space-between;
    width: 220px;
    height: 26px;
    box-sizing: border-box;
    margin-left: auto;
    border: 1px solid #6f6f6f;
    background: #fff;
    font-size: 14px;
    color: #aaa;
  }

  .search svg {
    stroke: #333;
    margin-right: 3px;
  }

  .help {
    display: flex;
    align-items: flex-start;
    gap: 10px;
    width: 110px;
    padding: 4px 0 0 10px;
    box-sizing: border-box;
  }

  .bang {
    margin-left: 6px;
  }

  /* ribbon */
  .ribbon {
    flex: none;
    display: flex;
    height: 108px;
    padding-top: 5px;
    box-sizing: border-box;
    background: #fff;
    border-bottom: 2px solid #dfdfdf;
    position: relative;
  }

  .group {
    flex: none;
    display: flex;
    flex-direction: column;
    height: 98px;
    box-sizing: border-box;
    border-right: 2px solid #dcdcdc;
  }

  .body {
    flex: 1;
    display: flex;
    align-items: flex-start;
  }

  .cmd {
    flex: none;
    display: flex;
    flex-direction: column;
    align-items: center;
    font-size: 14px;
    white-space: nowrap;
  }

  .cmd .ico {
    margin-top: -2px;
  }

  .cmd span {
    line-height: 20px;
    margin-top: 4px;
  }

  .cmd .arrow {
    margin-top: 4px;
  }

  .stack {
    margin-left: 5px;
  }

  .stack-item {
    display: flex;
    align-items: center;
    gap: 3px;
    height: 38px;
    white-space: nowrap;
    font-size: 14px;
  }

  .tool-row {
    display: flex;
    align-items: center;
    height: 32px;
  }

  .tool {
    width: 23px;
    display: flex;
    justify-content: center;
    flex: none;
  }

  .tool-sep {
    width: 1px;
    height: 22px;
    margin: 0 2.500px;
    background: #d8d8d8;
    flex: none;
  }

  .foot {
    flex: none;
    display: flex;
    align-items: center;
    height: 18px;
    margin-bottom: -3px;
    padding-right: 5px;
    color: #11708f;
    white-space: nowrap;
  }

  .foot span {
    flex: 1;
    min-width: 0;
    text-align: center;
    line-height: 18px;
    font-size: 14px;
  }

  .foot .arrow {
    margin: 0 4px;
  }

  .ribbon-end {
    position: absolute;
    right: 7px;
    bottom: 13px;
    line-height: 0;
  }

  /* toolbar */
  .toolbar {
    flex: none;
    display: flex;
    align-items: center;
    height: 32px;
    padding: 1px 0 0 13px;
    border-bottom: 2px solid #adadad;
    box-sizing: border-box;
    position: relative;
  }

  .burger {
    fill: none;
    stroke: #333;
    margin-right: 8px;
  }

  .menu-btn {
    margin-right: 5px;
    font-size: 15px;
    white-space: nowrap;
  }

  .bar-sep {
    width: 2px;
    height: 24px;
    margin: 0 0 0 12px;
    background: #dcdcdc;
  }

  .bar-sep.first {
    margin: 0 9px 0 8px;
  }

  .combo {
    display: flex;
    align-items: center;
    justify-content: space-between;
    height: 26px;
    padding: 0 5px 0 2px;
    box-sizing: border-box;
    border: 1px solid #777;
    font-size: 14px;
    color: #222;
  }

  .combo.one {
    width: 183px;
  }

  .combo.two {
    width: 192px;
  }

  .funnel {
    fill: none;
    stroke: #aaa;
    margin: 0 8px;
  }

  .bar-end {
    position: absolute;
    right: 7px;
    line-height: 0;
  }

  /* workspace */
  .work {
    flex: 1;
    min-height: 0;
    display: flex;
  }

  .strip {
    flex: none;
    display: flex;
    flex-direction: column;
    width: 32px;
    box-sizing: border-box;
    background: #dcdcdc;
    border-right: 2px solid #aaa;
  }

  .strip-top {
    flex: none;
    height: 41px;
    padding: 3px 0 0 4px;
    box-sizing: border-box;
  }

  .strip-btn {
    height: 42px;
    display: flex;
    align-items: center;
    justify-content: center;
    flex: none;
    margin-left: 4px;
    margin-right: -2px;
  }

  .strip-btn.on {
    height: 46px;
    margin-left: 2px;
    margin-right: -4px;
    margin-bottom: -4px;
    background: #fff;
    border: 1px solid #c4c4c4;
    border-right: none;
    box-sizing: border-box;
    position: relative;
  }

  .strip-gap {
    flex: none;
    height: 7px;
  }

  .strip-btn.lower {
    height: 52px;
  }

  .strip-btn.lower:last-child {
    height: 32px;
  }

  .nav {
    flex: none;
    display: flex;
    flex-direction: column;
    width: 463px;
    padding: 0 8px 0 6px;
    box-sizing: border-box;
    border-right: 2px solid #aaa;
  }

  .nav-title {
    display: flex;
    align-items: center;
    justify-content: space-between;
    height: 31px;
    padding: 0 7px 0 4px;
    flex: none;
  }

  .nav-title span {
    font-size: 15px;
  }

  .nav-title svg {
    fill: none;
    stroke: #222;
  }

  .grid {
    flex: none;
    border: 2px solid #e4e4e4;
    border-bottom: none;
  }

  .line {
    display: grid;
    grid-template-columns: 287px 45px 30px 30px 50px;
    height: 24px;
    box-sizing: border-box;
    border-bottom: 2px solid #ececec;
    margin-left: 1px;
  }

  .line > span {
    border-right: 2px solid #ececec;
    box-sizing: border-box;
  }

  .line > span:last-child {
    border-right: none;
  }

  .line > span:first-child {
    border-right: 1px solid #111;
    margin-bottom: -2px;
  }

  .line.alt {
    background: #f9f9f9;
  }

  .line.header {
    background: #efefef;
    border-bottom: 2px solid #dedede;
  }

  .line.header > span {
    padding-left: 6px;
    line-height: 22px;
    margin-bottom: 0;
    font-size: 15px;
    border-right: 2px solid #dedede;
    white-space: nowrap;
    overflow: hidden;
  }

  .name {
    display: flex;
    align-items: center;
    padding: 0 0 3px 9px;
    gap: 2px;
    color: #222;
  }

  .name b {
    font-size: 15px;
    font-weight: 700;
    line-height: 1;
    white-space: nowrap;
    margin-left: 2px;
  }

  .name b.plain {
    font-weight: 400;
  }

  .name svg {
    fill: none;
    stroke: #444;
    flex: none;
  }

  .name .tree {
    stroke: #888;
    stroke-dasharray: 1 1;
    margin-right: -2px;
  }

  .checkbox {
    stroke: #444;
  }

  .checkbox path {
    stroke: #e8243c;
    stroke-width: 2;
  }

  .mid {
    display: flex;
    align-items: center;
    justify-content: center;
    padding-bottom: 2px;
  }

  .mid svg {
    fill: none;
    stroke: #555;
  }

  .hscroll {
    height: 22px;
    background: #efefef;
    margin-left: 1px;
    padding: 8px 0 0 21px;
    box-sizing: border-box;
  }

  .hscroll i {
    display: block;
    width: 305px;
    height: 6px;
    background: #868686;
  }

  .splitter {
    flex: none;
    height: 5px;
    margin-top: 1px;
    border: 1px solid #adadad;
    box-sizing: border-box;
    background: #ddd;
  }

  .section {
    flex: none;
    display: flex;
    align-items: center;
    gap: 11px;
    height: 28px;
    box-sizing: border-box;
    padding-left: 12px;
    border-bottom: 2px solid #d0d0d0;
    color: #11708f;
    font-size: 18px;
  }

  .section svg {
    fill: #0b6685;
  }

  .view {
    flex: 1;
    min-width: 0;
    display: flex;
    flex-direction: column;
    border-right: 1px solid #d4d4d4;
  }

  .tabs {
    flex: none;
    display: flex;
    height: 30px;
    box-sizing: border-box;
    border-bottom: 2px solid #00638a;
  }

  .doc-tab {
    display: flex;
    align-items: center;
    gap: 2px;
    font-size: 15px;
    white-space: nowrap;
  }

  .doc-tab.home {
    width: 108px;
    padding-left: 6px;
    box-sizing: border-box;
  }

  .doc-tab.home svg {
    fill: none;
    stroke: #555;
  }

  .doc-tab.active {
    width: 219px;
    padding-left: 7px;
    box-sizing: border-box;
    background: #00638a;
    color: #fff;
    gap: 3px;
  }

  .mini {
    fill: none;
    stroke: #fff;
    margin-left: 3px;
  }

  .scene {
    display: block;
    width: 2065px;
    height: 1124px;
    flex: none;
  }

  .triad text {
    font-family: "Liberation Sans", sans-serif;
    font-size: 13px;
    text-anchor: middle;
  }

  .status {
    flex: none;
    display: flex;
    align-items: flex-end;
    justify-content: flex-end;
    height: 23px;
    box-sizing: border-box;
    border-top: 2px solid #b4b4b4;
    padding-right: 16px;
    font-size: 14px;
    line-height: 16px;
    color: #8a8a8a;
  }

  .desk {
    flex: none;
    height: 9px;
    border-top: 1px solid #b9c6d4;
    background: linear-gradient(90deg, #e4eef7, #dfeaf6 60%, #d8e4f4);
  }
</style>
